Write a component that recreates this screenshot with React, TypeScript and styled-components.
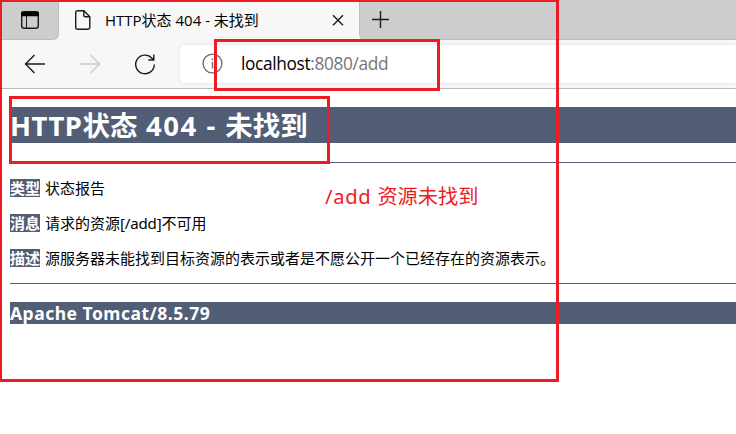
import React from "react";
import styled, { createGlobalStyle } from "styled-components";

const latin = `"Open Sans", "Noto Sans CJK SC", sans-serif`;
const tahoma = `"Noto Sans", "Noto Sans CJK SC", sans-serif`;
const slate = "#525d76";
const red = "#ed1c24";

const Global = createGlobalStyle`
  * { box-sizing: border-box; }
  html, body { margin: 0; background: #fff; }
  body { overflow: hidden; }
`;

const Screen = styled.div`
  position: relative;
  width: 736px;
  height: 434px;
  overflow: hidden;
  background: #fff;
  color: #000;
  white-space: nowrap;
`;

const TabStrip = styled.div`
  display: flex;
  height: 40px;
  background: #f7f7f7;
`;

const TabActions = styled.div`
  width: 59px;
  padding: 9px 0 0 19px;
  background: #cdcdcd;
  border-bottom: 1px solid #bdbdbd;
  border-right: 1px solid #bfbfbf;
  border-radius: 0 0 6px 0;
`;

const Tab = styled.div`
  display: flex;
  align-items: center;
  width: 300px;
  padding-left: 14px;
  background: #f7f7f7;
`;

const TabTitle = styled.div`
  width: 227px;
  margin-left: 12px;
  font: 15px/24px ${latin};
  padding-bottom: 1px;
`;

const Strip = styled.div`
  flex: 1;
  padding: 10px 0 0 11px;
  background: #cdcdcd;
  border-bottom: 1px solid #bdbdbd;
  border-left: 1px solid #bfbfbf;
  border-radius: 0 0 0 6px;
`;

const Toolbar = styled.div`
  display: flex;
  align-items: center;
  height: 49px;
  padding: 0 0 1px 24px;
  gap: 33px;
  background: #f7f7f7;
  border-bottom: 1px solid #bababa;
`;

const Address = styled.div`
  display: flex;
  align-items: center;
  flex: 1;
  height: 38px;
  margin-left: -9px;
  padding-left: 22px;
  gap: 18px;
  background: #fff;
  border-radius: 5px 0 0 5px;
  box-shadow: 0 0 4px rgba(0, 0, 0, 0.08);
`;

const Url = styled.div`
  font: 17.3px/26px ${latin};
`;

const Path = styled.span`
  color: #767676;
`;

const Page = styled.main`
  padding: 18px 0 0 10px;
  font-family: ${tahoma};
`;

const Title = styled.h1`
  margin: 0 0 19px;
  height: 36px;
  background: ${slate};
  color: #fff;
  font-size: 27.5px;
  line-height: 38px;
  font-weight: 700;
`;

const Rule = styled.div`
  height: 1px;
  background: ${slate};
`;

const Details = styled.div`
  display: grid;
  gap: 17px;
  padding: 16px 0;
`;

const Row = styled.div`
  display: flex;
  height: 18px;
  gap: 5px;
  font-size: 15px;
  line-height: 18px;
`;

const Label = styled.b`
  background: ${slate};
  color: #fff;
`;

const Footer = styled.h3`
  margin: 18px 0 0;
  height: 22px;
  background: ${slate};
  color: #fff;
  font-size: 17.5px;
  line-height: 22px;
`;

const Run = styled.span<{ $ls: number }>`
  letter-spacing: ${(p) => p.$ls}px;
`;

const Mark = styled.div<{ $x: number; $y: number; $w: number; $h: number }>`
  position: absolute;
  left: ${(p) => p.$x}px;
  top: ${(p) => p.$y}px;
  width: ${(p) => p.$w}px;
  height: ${(p) => p.$h}px;
  border: 3px solid ${red};
`;

const OuterMark = styled(Mark)`
  border-width: 2px 3px 3px 2px;
`;

const Note = styled.div`
  position: absolute;
  left: 325px;
  top: 181px;
  color: ${red};
  font: 20.2px/30px ${tahoma};
`;

const Icon = styled.svg<{ $color?: string }>`
  display: block;
  flex: none;
  fill: none;
  stroke: ${(p) => p.$color ?? "#1b1b1b"};
  stroke-width: 1.4;
`;

export default function App() {
  return (
    <Screen>
      <Global />
      <TabStrip>
        <TabActions>
          <Icon width="22" height="22" viewBox="0 0 22 22">
            <rect x="2.7" y="2.7" width="16.6" height="16.6" rx="2.6" />
            <path d="M3 3.5h16V6.5H3z" fill="#000" stroke="#000" />
            <path d="M7.5 7v12" strokeWidth="1" />
          </Icon>
        </TabActions>
        <Tab>
          <Icon width="20" height="22" viewBox="0 0 20 22">
            <path d="M4.5 1.7h6.3l6 6v10.8a1.8 1.8 0 0 1-1.8 1.8H4.5a1.8 1.8 0 0 1-1.8-1.8V3.5a1.8 1.8 0 0 1 1.8-1.8z" />
            <path d="M10.8 2v4.2a1.5 1.5 0 0 0 1.5 1.5h4.3" />
          </Icon>
          <TabTitle>HTTP状态 404 - 未找到</TabTitle>
          <Icon width="12" height="12" viewBox="0 0 12 12">
            <path d="M1 1.2l10 10M11 1.2l-10 10" />
          </Icon>
        </Tab>
        <Strip>
          <Icon width="19" height="19" viewBox="0 0 19 19">
            <path d="M9.5 1v17M1 9.5h17" />
          </Icon>
        </Strip>
      </TabStrip>
      <Toolbar>
        <Icon width="22" height="22" viewBox="0 0 22 22">
          <path d="M21 11H1.5M10.5 2l-9 9 9 9" />
        </Icon>
        <Icon width="22" height="22" viewBox="0 0 22 22" $color="#cbcbcb">
          <path d="M1 11h19.5M11.5 2l9 9-9 9" />
        </Icon>
        <Icon width="22" height="22" viewBox="0 0 22 22">
          <path d="M20.3 11.5A9.3 9.3 0 1 1 18 5.3l1.7 1.7M19.8 1.5V7h-5.5" />
        </Icon>
        <Address>
          <Icon width="21" height="21" viewBox="0 0 21 21" $color="#717171">
            <circle cx="10.5" cy="10.5" r="9.4" />
            <path d="M10.5 9v6.5M10.5 5.5v1.7" />
          </Icon>
          <Url>
            <Run $ls={-0.35}>
              localhost<Path>:8080/add</Path>
            </Run>
          </Url>
        </Address>
      </Toolbar>
      <Page>
        <Title>
          <Run $ls={0.5}>HTTP</Run>状态<Run $ls={1.5}> 404 - </Run>未找到
        </Title>
        <Rule />
        <Details>
          <Row>
            <Label>类型</Label>
            <span>状态报告</span>
          </Row>
          <Row>
            <Label>消息</Label>
            <span>
              请求的资源<Run $ls={-0.15}>[/add]</Run>不可用
            </span>
          </Row>
          <Row>
            <Label>描述</Label>
            <span>源服务器未能找到目标资源的表示或者是不愿公开一个已经存在的资源表示。</span>
          </Row>
        </Details>
        <Rule />
        <Footer>
          <Run $ls={0.5}>Apache Tomcat/8.5.79</Run>
        </Footer>
      </Page>
      <Note>
        <Run $ls={0.7}>/add </Run>资源未找到
      </Note>
      <OuterMark $x={0} $y={0} $w={559} $h={382} />
      <Mark $x={214} $y={39} $w={226} $h={52} />
      <Mark $x={9} $y={96} $w={321} $h={68} />
    </Screen>
  );
}
